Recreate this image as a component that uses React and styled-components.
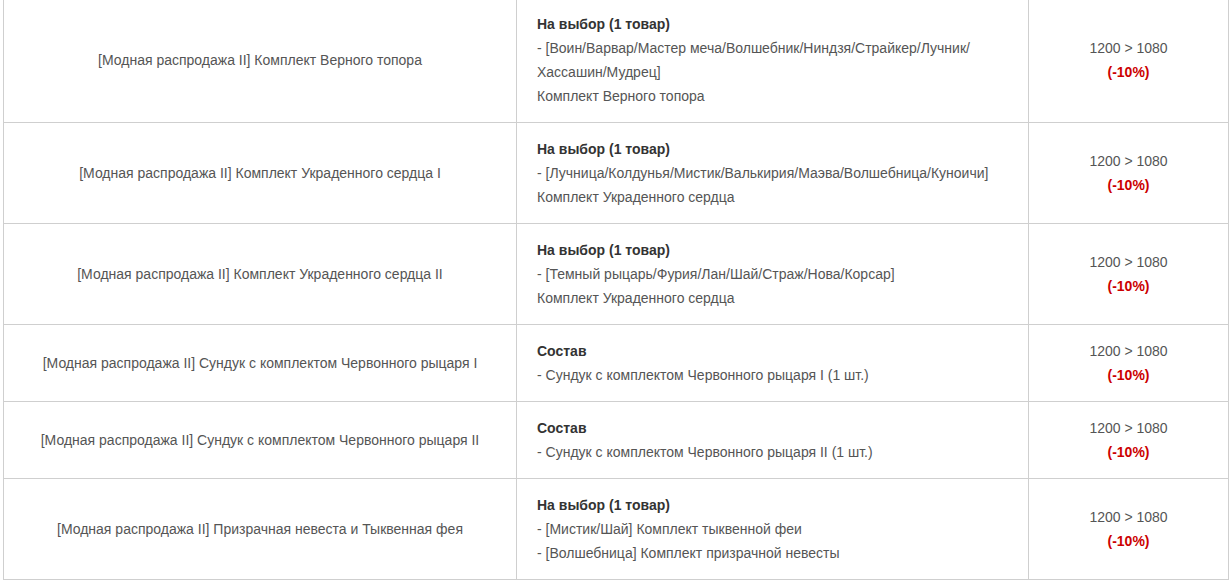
import React from 'react'
import styled, { createGlobalStyle } from 'styled-components'

const GlobalStyle = createGlobalStyle`
  html, body {
    margin: 0;
    padding: 0;
    background: #fff;
  }
  body {
    font-family: "Liberation Sans", Arial, sans-serif;
    font-size: 14px;
    color: #555;
  }
`

const Page = styled.div`
  padding: 0 3px 0 3px;
  margin-top: -3px;
`

const Table = styled.table`
  width: 1225px;
  border-collapse: collapse;
  table-layout: fixed;
`

const Cell = styled.td`
  border: 1px solid #cfcfcf;
  padding: 14px ${({ $align }) => ($align === 'left' ? '20px' : '10px')};
  text-align: ${({ $align }) => $align || 'center'};
  vertical-align: middle;
  line-height: 24px;
  color: #555;
`

const Title = styled.div`
  font-weight: bold;
  color: #333;
`

const Line = styled.div`
  white-space: nowrap;
`

const Sale = styled.div`
  font-weight: bold;
  color: #c00;
`

const rows = [
  {
    name: '[Модная распродажа II] Комплект Верного топора',
    title: 'На выбор (1 товар)',
    lines: [
      '- [Воин/Варвар/Мастер меча/Волшебник/Ниндзя/Страйкер/Лучник/',
      'Хассашин/Мудрец]',
      'Комплект Верного топора',
    ],
  },
  {
    name: '[Модная распродажа II] Комплект Украденного сердца I',
    title: 'На выбор (1 товар)',
    lines: [
      '- [Лучница/Колдунья/Мистик/Валькирия/Маэва/Волшебница/Куноичи]',
      'Комплект Украденного сердца',
    ],
  },
  {
    name: '[Модная распродажа II] Комплект Украденного сердца II',
    title: 'На выбор (1 товар)',
    lines: [
      '- [Темный рыцарь/Фурия/Лан/Шай/Страж/Нова/Корсар]',
      'Комплект Украденного сердца',
    ],
  },
  {
    name: '[Модная распродажа II] Сундук с комплектом Червонного рыцаря I',
    title: 'Состав',
    lines: ['- Сундук с комплектом Червонного рыцаря I (1 шт.)'],
  },
  {
    name: '[Модная распродажа II] Сундук с комплектом Червонного рыцаря II',
    title: 'Состав',
    lines: ['- Сундук с комплектом Червонного рыцаря II (1 шт.)'],
  },
  {
    name: '[Модная распродажа II] Призрачная невеста и Тыквенная фея',
    title: 'На выбор (1 товар)',
    lines: [
      '- [Мистик/Шай] Комплект тыквенной феи',
      '- [Волшебница] Комплект призрачной невесты',
    ],
  },
]

const App = () => {
  return (
    <Page>
      <GlobalStyle />
      <Table>
        <colgroup>
          <col style={{ width: 513 }} />
          <col style={{ width: 512 }} />
          <col style={{ width: 200 }} />
        </colgroup>
        <tbody>
          {rows.map((row) => (
            <tr key={row.name}>
              <Cell>{row.name}</Cell>
              <Cell $align="left">
                <Title>{row.title}</Title>
                {row.lines.map((line) => (
                  <Line key={line}>{line}</Line>
                ))}
              </Cell>
              <Cell>
                <div>1200 &gt; 1080</div>
                <Sale>(-10%)</Sale>
              </Cell>
            </tr>
          ))}
        </tbody>
      </Table>
    </Page>
  )
}

export default App
